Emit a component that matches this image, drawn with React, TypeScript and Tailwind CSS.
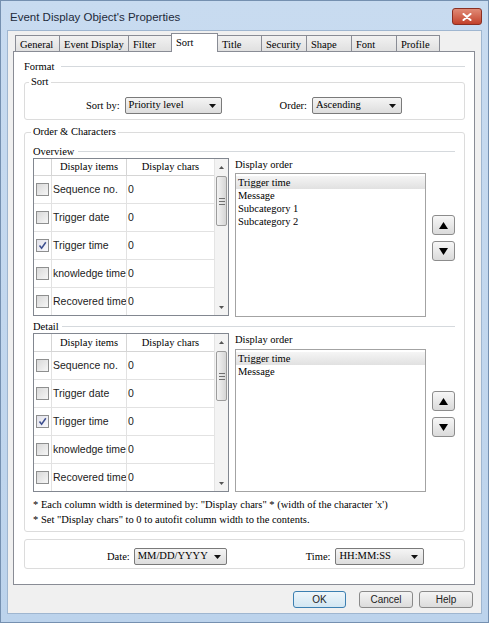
import React from "react";

const SERIF = "font-['Liberation_Serif',serif]";
const SANS = "font-['Liberation_Sans',Arial,sans-serif]";

const rows = ["Sequence no.", "Trigger date", "Trigger time", "knowledge time", "Recovered time"];

function Combo({ width, text }: { width: string; text: string }) {
  return (
    <div
      className={`${width} h-[17px] flex items-center justify-between rounded-[2px] border border-[#7a7a7a] bg-linear-to-b from-[#f5f5f5] to-[#dddddd] pl-[3px] pr-[5px] text-[10.5px] leading-none text-black`}
    >
      <span>{text}</span>
      <svg width="7" height="4" viewBox="0 0 7 4">
        <path d="M0 0H7L3.5 4Z" fill="#111" />
      </svg>
    </div>
  );
}

function Check({ checked }: { checked: boolean }) {
  return (
    <div
      className={`w-[13px] h-[13px] border border-[#8e8f8f] flex items-center justify-center ${
        checked ? "bg-linear-to-br from-[#e2e2ea] to-[#f8f8fc]" : "bg-linear-to-br from-[#d9d9d9] to-[#f6f6f6]"
      }`}
    >
      {checked && (
        <svg width="9" height="9" viewBox="0 0 9 9">
          <path d="M1.5 4.5L3.6 7.2L7.8 1.2" fill="none" stroke="#3d4f8f" strokeWidth="1.5" />
        </svg>
      )}
    </div>
  );
}

function Scrollbar() {
  return (
    <div className="w-[14px] shrink-0 flex flex-col border-l border-[#e4e4e4] bg-[#f3f3f3]">
      <div className="h-[17px] shrink-0 flex items-center justify-center">
        <svg width="5" height="3" viewBox="0 0 5 3">
          <path d="M2.5 0L5 3H0Z" fill="#555" />
        </svg>
      </div>
      <div className="h-[50px] shrink-0 mx-[1px] rounded-[2px] border border-[#9c9c9c] bg-linear-to-r from-[#f3f3f3] to-[#d6d6d6] flex flex-col items-center justify-center gap-[2px]">
        <div className="w-[6px] h-px bg-[#707070]" />
        <div className="w-[6px] h-px bg-[#707070]" />
        <div className="w-[6px] h-px bg-[#707070]" />
      </div>
      <div className="flex-1" />
      <div className="h-[16px] shrink-0 flex items-center justify-center">
        <svg width="5" height="3" viewBox="0 0 5 3">
          <path d="M0 0H5L2.5 3Z" fill="#555" />
        </svg>
      </div>
    </div>
  );
}

function ItemTable({ h, headerH }: { h: string; headerH: string }) {
  return (
    <div className={`${h} w-[196px] shrink-0 flex border border-[#828790] bg-white`}>
      <div className="flex-1 flex flex-col overflow-hidden">
        <div className={`${headerH} shrink-0 flex border-b border-[#d5d5d5] text-[10.5px]`}>
          <div className="w-[18px] border-r border-[#d5d5d5]" />
          <div className="w-[75px] border-r border-[#d5d5d5] flex items-center justify-center">Display items</div>
          <div className="flex-1 flex items-center justify-center">Display chars</div>
        </div>
        {rows.map((r, i) => (
          <div key={r} className="h-[28px] shrink-0 flex border-b border-[#e2e2e2]">
            <div className="w-[18px] border-r border-[#e2e2e2] flex items-center justify-center">
              <Check checked={i === 2} />
            </div>
            <div
              className={`w-[75px] border-r border-[#e2e2e2] flex items-center pl-[1px] whitespace-nowrap overflow-hidden text-[10.5px] text-[#222] ${SANS}`}
            >
              {r}
            </div>
            <div className={`flex-1 flex items-center pl-[1px] text-[10.5px] text-[#222] ${SANS}`}>0</div>
          </div>
        ))}
      </div>
      <Scrollbar />
    </div>
  );
}

function ListBox({ h, items }: { h: string; items: string[] }) {
  return (
    <div className={`${h} border border-[#a3a3a3] bg-white pt-[2px] text-[10.5px] leading-[13px]`}>
      {items.map((t, i) => (
        <div
          key={t}
          className={i === 0 ? "pl-[2px] bg-linear-to-b from-[#f5f5f5] to-[#e1e1e1]" : "pl-[2px]"}
        >
          {t}
        </div>
      ))}
    </div>
  );
}

function ArrowBtn({ up }: { up: boolean }) {
  return (
    <div className="w-[23px] h-[20px] rounded-[3px] border border-[#8c8c8c] bg-linear-to-b from-[#f7f7f7] to-[#dadada] flex items-center justify-center">
      <svg width="9" height="7" viewBox="0 0 9 7">
        <path d={up ? "M4.5 0L9 7H0Z" : "M0 0H9L4.5 7Z"} fill="#000" />
      </svg>
    </div>
  );
}

function Section({
  tableH,
  headerH,
  labelH,
  listH,
  arrowsPt,
  items,
}: {
  tableH: string;
  headerH: string;
  labelH: string;
  listH: string;
  arrowsPt: string;
  items: string[];
}) {
  return (
    <div className="flex items-start gap-[6px]">
      <ItemTable h={tableH} headerH={headerH} />
      <div className="w-[191px] shrink-0 flex flex-col">
        <div className={`${labelH} text-[10.5px] leading-[13px]`}>Display order</div>
        <ListBox h={listH} items={items} />
      </div>
      <div className={`${arrowsPt} flex flex-col gap-[6px]`}>
        <ArrowBtn up />
        <ArrowBtn up={false} />
      </div>
    </div>
  );
}

function LineLabel({ text, gap }: { text: string; gap: string }) {
  return (
    <div className={`flex items-center ${gap} h-[12px]`}>
      <span className="text-[10.5px] leading-none">{text}</span>
      <div className="flex-1 h-px bg-[#d5d9dd] -mt-[1px]" />
    </div>
  );
}

function Btn({ label, w, def }: { label: string; w: string; def?: boolean }) {
  return (
    <div
      className={`${w} h-[17px] rounded-[3px] border flex items-center justify-center text-[10px] text-[#222] ${SANS} ${
        def
          ? "border-[#3c7fb1] bg-linear-to-b from-[#eef6fb] to-[#d2e6f2]"
          : "border-[#8a8a8a] bg-linear-to-b from-[#f4f4f4] to-[#dcdcdc]"
      }`}
    >
      {label}
    </div>
  );
}

const tabs = [
  { label: "General", w: "w-[44px]" },
  { label: "Event Display", w: "w-[69px]" },
  { label: "Filter", w: "w-[44px]" },
  { label: "Sort", w: "w-[47px]", sel: true },
  { label: "Title", w: "w-[44px]" },
  { label: "Security", w: "w-[45px]" },
  { label: "Shape", w: "w-[45px]" },
  { label: "Font", w: "w-[45px]" },
  { label: "Profile", w: "w-[44px]" },
];

export default function App() {
  return (
    <div
      className={`w-[489px] h-[623px] flex flex-col border border-[#7590b0] bg-linear-to-b from-[#c8dbf0] to-[#bcd3ec] text-black ${SERIF}`}
    >
      {/* title bar */}
      <div className="h-[29px] shrink-0 flex items-start justify-between pl-[9px]">
        <div className={`mt-[9px] text-[11.5px] leading-[14px] text-[#1e2a3a] ${SANS}`}>
          Event Display Object&apos;s Properties
        </div>
        <div className="mt-[7px] mr-[6px] w-[30px] h-[17px] rounded-[3px] border border-[#8b2f22] bg-linear-to-b from-[#e08a76] to-[#c2402a] flex items-center justify-center">
          <svg width="10" height="8" viewBox="0 0 10 8">
            <path d="M1.5 1L8.5 7M8.5 1L1.5 7" stroke="#fff" strokeWidth="2" strokeLinecap="round" />
          </svg>
        </div>
      </div>

      {/* client area */}
      <div className="ml-[6px] mr-[6px] mb-[8px] flex-1 flex flex-col border border-[#9fb6d0] bg-[#f0f0f0]">
        {/* tabs */}
        <div className="flex items-end pl-[7px] pt-[2px] text-[10.5px]">
          {tabs.map((t, i) =>
            t.sel ? (
              <div
                key={t.label}
                className={`${t.w} h-[19px] -mb-px -mx-[1px] relative z-10 border-t border-l border-r border-[#898c95] bg-white pl-[4px] pt-[2px] leading-[13px]`}
              >
                {t.label}
              </div>
            ) : (
              <div
                key={t.label}
                className={`${t.w} h-[16px] border-t border-l ${
                  i === tabs.length - 1 ? "border-r" : ""
                } border-[#898c95] bg-linear-to-b from-[#f2f2f2] to-[#e0e0e0] pl-[4px] pt-[2px] leading-[13px] whitespace-nowrap overflow-hidden`}
              >
                {t.label}
              </div>
            )
          )}
        </div>

        {/* panel */}
        <div className="ml-[5px] w-[462px] h-[534px] shrink-0 border border-[#898c95] bg-white pt-[8px] pl-[10px] pr-[9px]">
          <div className="flex items-center gap-[7px] h-[14px]">
            <span className="text-[10.5px] leading-none">Format</span>
            <div className="flex-1 h-px bg-[#d5d9dd] -mt-[2px]" />
          </div>

          <fieldset className="mt-[1px] border border-[#dcdcdc] rounded-[3px] pb-[5px]">
            <legend className="ml-[4px] px-[2px] text-[10.5px] leading-[14px]">Sort</legend>
            <div className="flex items-center pt-[8px] pl-[61px] text-[10.5px]">
              <div className="flex items-center gap-[5px]">
                <span>Sort by:</span>
                <Combo width="w-[97px]" text="Priority level" />
              </div>
              <div className="ml-[58px] flex items-center gap-[5px]">
                <span>Order:</span>
                <Combo width="w-[90px]" text="Ascending" />
              </div>
            </div>
          </fieldset>

          <fieldset className="mt-[5px] border border-[#dcdcdc] rounded-[3px] pl-[8px] pr-[9px] pb-[4px]">
            <legend className="ml-[-2px] px-[2px] text-[10.5px] leading-[14px]">Order &amp; Characters</legend>
            <div className="pt-[7px]">
              <LineLabel text="Overview" gap="gap-[4px]" />
              <Section
                tableH="h-[158px]"
                headerH="h-[17px]"
                labelH="h-[15px]"
                listH="h-[144px]"
                arrowsPt="pt-[57px]"
                items={["Trigger time", "Message", "Subcategory 1", "Subcategory 2"]}
              />
              <div className="mt-[4px]">
                <LineLabel text="Detail" gap="gap-[3px]" />
              </div>
              <Section
                tableH="h-[159px]"
                headerH="h-[18px]"
                labelH="h-[16px]"
                listH="h-[143px]"
                arrowsPt="pt-[58px]"
                items={["Trigger time", "Message"]}
              />
              <div className="mt-[5px] text-[10.5px] leading-[15px]">
                <div>* Each column width is determined by: &quot;Display chars&quot; * (width of the character &apos;x&apos;)</div>
                <div>* Set &quot;Display chars&quot; to 0 to autofit column width to the contents.</div>
              </div>
            </div>
          </fieldset>

          <div className="mt-[7px] h-[30px] border border-[#dcdcdc] rounded-[3px] flex items-start pt-[8px] pl-[82px] text-[10.5px]">
            <div className="flex items-center gap-[4px]">
              <span>Date:</span>
              <Combo width="w-[93px]" text="MM/DD/YYYY" />
            </div>
            <div className="ml-[79px] flex items-center gap-[5px]">
              <span>Time:</span>
              <Combo width="w-[89px]" text="HH:MM:SS" />
            </div>
          </div>
        </div>

        {/* buttons */}
        <div className="mt-[6px] flex justify-end gap-[6px] pr-[8px]">
          <Btn label="OK" w="w-[53px]" def />
          <div className="w-px" />
          <Btn label="Cancel" w="w-[54px]" />
          <Btn label="Help" w="w-[54px]" />
        </div>
      </div>
    </div>
  );
}
